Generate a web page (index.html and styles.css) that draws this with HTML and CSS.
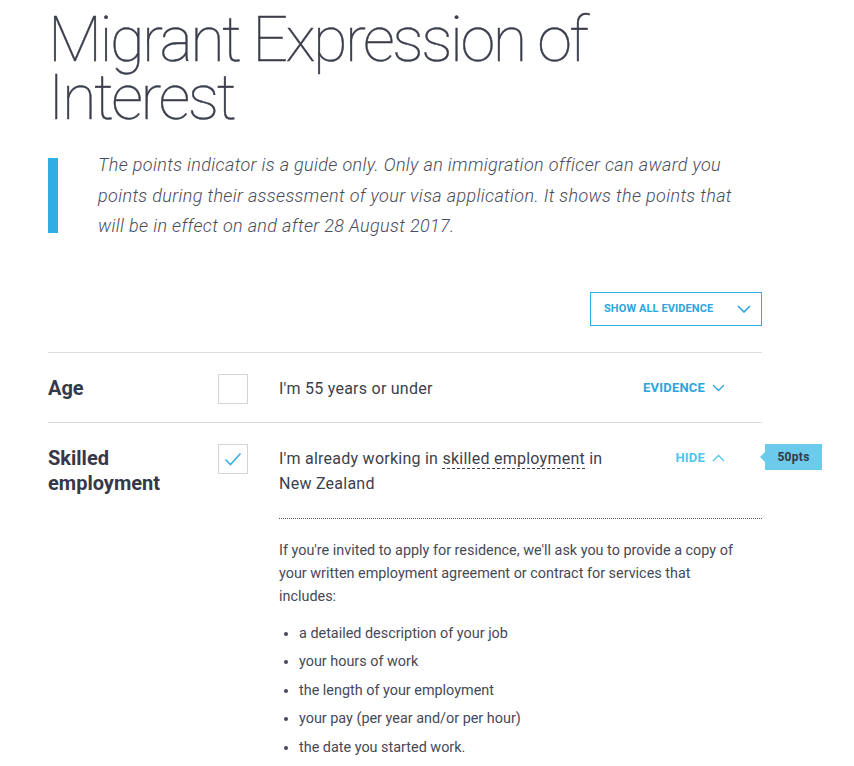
FILE: index.html
```html
<!DOCTYPE html>
<html lang="en">
<head>
<meta charset="utf-8">
<title>Migrant Expression of Interest</title>
<link rel="stylesheet" href="styles.css">
</head>
<body>
<main class="page">
  <h1 class="title">Migrant Expression of Interest</h1>
  <blockquote class="note">
    <span class="bar"></span>
    <p>The points indicator is a guide only. Only an immigration officer can award you points during their assessment of your visa application. It shows the points that will be in effect on and after 28 August 2017.</p>
  </blockquote>
  <div class="toolbar">
    <button class="show-all">SHOW ALL EVIDENCE
      <svg class="chev" width="14" height="8" viewBox="0 0 14 8"><path d="M1 1l6 6 6-6" fill="none" stroke="currentColor" stroke-width="1.6"/></svg>
    </button>
  </div>
  <section class="rows">
    <div class="row">
      <h2 class="label">Age</h2>
      <span class="box"></span>
      <p class="desc">I'm 55 years or under</p>
      <a class="toggle">EVIDENCE
        <svg class="chev" width="13" height="8" viewBox="0 0 13 8"><path d="M1 1l5.5 5.5L12 1" fill="none" stroke="currentColor" stroke-width="1.3"/></svg>
      </a>
    </div>
    <div class="row open">
      <h2 class="label">Skilled employment</h2>
      <span class="box checked">
        <svg width="18" height="14" viewBox="0 0 18 14"><path d="M1.5 7.5l5 5L16.5 1.5" fill="none" stroke="#3aaee2" stroke-width="1.6"/></svg>
      </span>
      <p class="desc">I'm already working in <span class="term">skilled employment</span> in New Zealand</p>
      <a class="toggle light">HIDE
        <svg class="chev" width="13" height="8" viewBox="0 0 13 8"><path d="M1 7l5.5-5.5L12 7" fill="none" stroke="currentColor" stroke-width="1.3"/></svg>
      </a>
      <span class="pts">50pts</span>
      <div class="evidence">
        <p>If you're invited to apply for residence, we'll ask you to provide a copy of your written employment agreement or contract for services that includes:</p>
        <ul>
          <li>a detailed description of your job</li>
          <li>your hours of work</li>
          <li>the length of your employment</li>
          <li>your pay (per year and/or per hour)</li>
          <li>the date you started work.</li>
        </ul>
      </div>
    </div>
  </section>
</main>
</body>
</html>
```
FILE: styles.css
```css
* { box-sizing: border-box; }
html, body { margin: 0; padding: 0; background: #fff; }
body { font-family: Roboto, "Liberation Sans", sans-serif; color: #3c3f4d; }
.page { width: 714px; margin-left: 48px; padding-top: 11px; }
.title {
  font-family: Roboto, sans-serif;
  font-weight: 100;
  font-size: 63px;
  line-height: 58px;
  margin: 0;
  color: #3b3e4c;
  width: 600px;
  letter-spacing: -2.5px;
  -webkit-text-stroke: 0.4px #3b3e4c;
}
.note {
  margin: 31px 0 0 0;
  display: flex;
  align-items: flex-start;
}
.bar {
  flex: 0 0 10px;
  height: 75px;
  background: #2eaee2;
  margin-right: 40px;
}
.note p {
  margin: -8px 0 0 0;
  font-style: italic;
  font-weight: 300;
  font-size: 18px;
  line-height: 30.5px;
  color: #494c5a;
  letter-spacing: 0.35px;
}
.toolbar { display: flex; justify-content: flex-end; margin-top: 50px; }
.show-all {
  display: flex; align-items: center; justify-content: space-between;
  width: 172px; height: 34px;
  padding: 0 10px 0 13px;
  background: #fff;
  border: 1px solid #2eaee2;
  color: #2ea5dc;
  font-family: Roboto, sans-serif;
  font-weight: 700;
  font-size: 11px;
  letter-spacing: 0.1px;
}
.rows { margin-top: 26px; border-top: 1px solid #dcdcdc; }
.row {
  position: relative;
  display: grid;
  grid-template-columns: 170px 61px 1fr 150px;
  border-bottom: 1px solid #dcdcdc;
  padding: 21px 0 18px;
  align-items: start;
}
.row.open { border-bottom: none; padding-bottom: 0; }
.label {
  margin: 0;
  font-size: 20px;
  font-weight: 700;
  line-height: 25px;
  color: #353848;
  padding-top: 2px;
  max-width: 140px;
}
.box {
  width: 30px; height: 30px;
  border: 1px solid #d4d4d4;
  display: flex; align-items: center; justify-content: center;
}
.desc {
  margin: 0;
  font-size: 16px;
  line-height: 25px;
  padding-top: 2px;
  color: #3c3f4d;
  letter-spacing: 0.25px;
}
.term {
  text-decoration: underline dashed #3c3f4d 1px;
  text-underline-offset: 4px;
}
.toggle {
  display: flex; align-items: center; justify-content: flex-end; gap: 7px;
  padding-right: 37px;
  padding-top: 6px;
  font-weight: 700;
  font-size: 13px;
  color: #2ea5dc;
  letter-spacing: 0.2px;
  line-height: 16px;
}
.toggle.light { color: #4cc6f0; }
.pts {
  position: absolute;
  left: 717px; top: 21px;
  width: 57px; height: 26px;
  background: #6ccbea;
  color: #333a45;
  font-size: 12px;
  font-weight: 700;
  letter-spacing: 0.3px;
  display: flex; align-items: center; justify-content: center;
}
.pts::before {
  content: "";
  position: absolute;
  left: -5px; top: 8px;
  border-style: solid;
  border-width: 5px 5px 5px 0;
  border-color: transparent #6ccbea transparent transparent;
}
.evidence {
  grid-column: 3 / 5;
  margin-top: 22px;
  border-top: 1px dotted #555;
  padding-top: 20px;
  padding-right: 24px;
  font-size: 14.4px;
  color: #464957;
}
.evidence p { margin: 0; line-height: 23px; }
.evidence ul { margin: 12px 0 0; padding-left: 20px; }
.evidence li { line-height: 28.5px; }
```
